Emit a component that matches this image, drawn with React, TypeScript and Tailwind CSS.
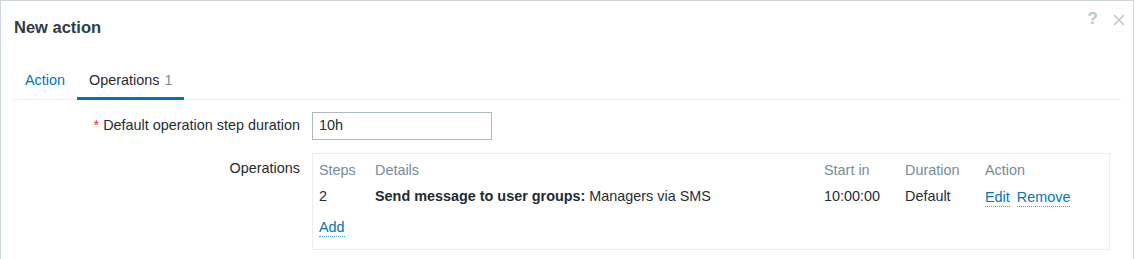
import React from 'react';

const link = 'text-[#0275b8] border-b border-dotted border-[#4a9fd3] leading-[17px]';

export default function App() {
  return (
    <div className="w-[1136px] h-[259px] overflow-hidden bg-white font-['Liberation_Sans',Arial,sans-serif] text-[14.4px] text-[#1f2c33]">
      <div className="w-[1134px] h-[300px] border border-[#ccd5d9]">
        {/* Header */}
        <div className="h-[53px] flex items-center justify-between pl-[13px] pr-[8px]">
          <h4 className="text-[16.5px] font-bold text-[#2f3d44]">New action</h4>
          <div className="flex items-center gap-[15px] self-start mt-[10px] text-[#b8c6cd]">
            <span className="text-[17px] font-semibold leading-[16px]">?</span>
            <svg width="12" height="12" viewBox="0 0 12 12" className="mt-[1px]">
              <path d="M1 1 L11 11 M11 1 L1 11" stroke="currentColor" strokeWidth="1.5" />
            </svg>
          </div>
        </div>

        {/* Tabs */}
        <div className="mt-[9px] mx-[12px] flex border-b border-[#ebeef0]">
          <div className="h-[37px] -mb-px px-[12px] pt-[2px] flex items-center border-b-[3px] border-transparent text-[#0275b8]">
            Action
          </div>
          <div className="h-[37px] -mb-px px-[12px] pt-[2px] flex items-center border-b-[3px] border-[#0275b8]">
            Operations<span className="ml-[5px] text-[#768d99]">1</span>
          </div>
        </div>

        {/* Form */}
        <div className="mx-[12px]">
          <div className="mt-[12px] flex items-center">
            <div className="w-[299px] text-right pr-[12px]">
              <span className="text-[#e33734] mr-[4px]">*</span>Default operation step duration
            </div>
            <div className="w-[180px] h-[28px] border border-[#acbbc2] flex items-center px-[6px]">10h</div>
          </div>

          <div className="mt-[13px] flex items-start">
            <div className="w-[299px] text-right pr-[12px] pt-[5px]">Operations</div>
            <div className="w-[798px] h-[97px] border border-[#ebeef0] pl-[6px] pt-[5px]">
              <div className="grid grid-cols-[56px_449px_81px_80px_1fr]">
                <div className="h-[24px] flex items-center text-[#768d99]">Steps</div>
                <div className="h-[24px] flex items-center text-[#768d99]">Details</div>
                <div className="h-[24px] flex items-center text-[#768d99]">Start in</div>
                <div className="h-[24px] flex items-center text-[#768d99]">Duration</div>
                <div className="h-[24px] flex items-center text-[#768d99]">Action</div>

                <div className="h-[28px] flex items-center">2</div>
                <div className="h-[28px] flex items-center">
                  <span className="font-bold mr-[4px]">Send message to user groups:</span>Managers via SMS
                </div>
                <div className="h-[28px] flex items-center">10:00:00</div>
                <div className="h-[28px] flex items-center">Default</div>
                <div className="h-[28px] flex items-center gap-[7px] pt-[1px]">
                  <span className={link}>Edit</span>
                  <span className={link}>Remove</span>
                </div>
              </div>
              <div className="mt-[2px] h-[28px] flex items-center pt-[1px]">
                <span className={link}>Add</span>
              </div>
            </div>
          </div>
        </div>
      </div>
    </div>
  );
}
